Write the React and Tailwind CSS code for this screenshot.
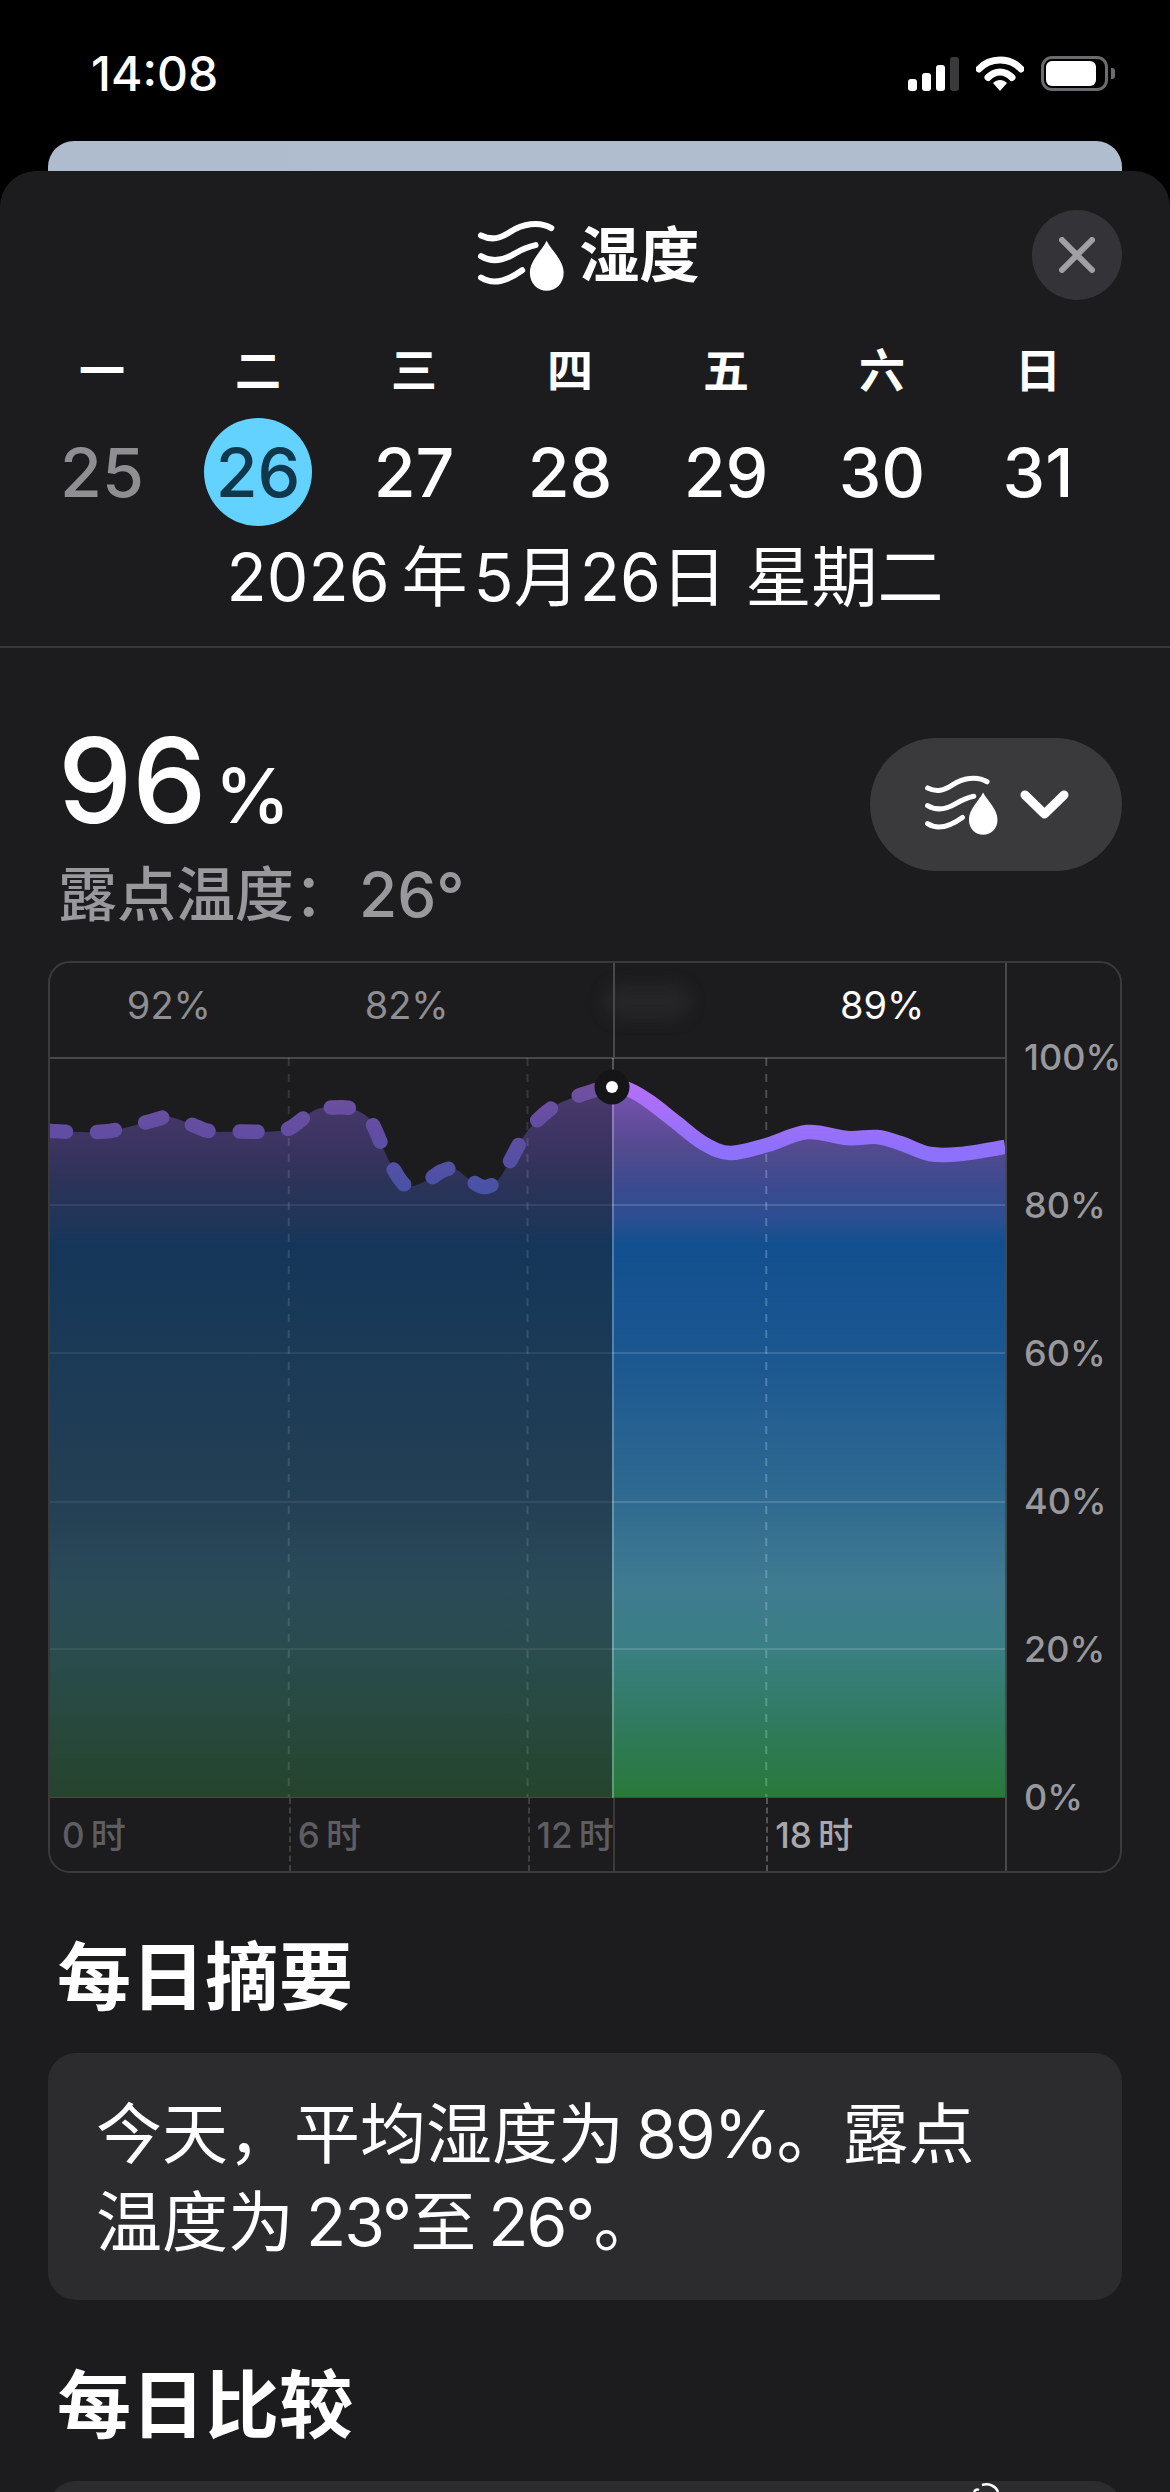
const FONT = 'font-["Inter","Noto_Sans_CJK_SC",sans-serif]';

// curve points read off the chart, in page pixels
const pastPoints = [
  [48, 1131], [105, 1131.5], [151, 1121], [170, 1117], [195, 1126], [212, 1131.5], [243, 1131.5], [273, 1131.5],
  [290, 1128], [315, 1110], [333, 1107.5], [350, 1108], [365, 1115], [373, 1125], [384, 1150], [394, 1170],
  [407, 1186], [426, 1181], [442, 1171], [455, 1169], [470, 1180], [484, 1187], [497, 1181], [509, 1163],
  [526, 1133], [549, 1110], [572, 1098], [612, 1085],
];
const futurePoints = [
  [612, 1085], [630, 1090], [650, 1102], [677, 1123], [703, 1143], [730, 1153], [767, 1145], [807, 1132],
  [847, 1138], [877, 1137], [900, 1143], [930, 1154], [960, 1154], [1005, 1147],
];

function smoothPath(pts) {
  let d = `M${pts[0][0]} ${pts[0][1]}`;
  for (let i = 0; i < pts.length - 1; i++) {
    const p0 = pts[i - 1] || pts[i];
    const p1 = pts[i];
    const p2 = pts[i + 1];
    const p3 = pts[i + 2] || p2;
    const c1x = p1[0] + (p2[0] - p0[0]) / 6;
    const c1y = p1[1] + (p2[1] - p0[1]) / 6;
    const c2x = p2[0] - (p3[0] - p1[0]) / 6;
    const c2y = p2[1] - (p3[1] - p1[1]) / 6;
    d += ` C${c1x} ${c1y} ${c2x} ${c2y} ${p2[0]} ${p2[1]}`;
  }
  return d;
}

const pastLine = smoothPath(pastPoints);
const futureLine = smoothPath(futurePoints);
const pastArea = `${pastLine} L612 1798 L48 1798 Z`;
const futureArea = `${futureLine} L1005 1798 L612 1798 Z`;

function HumidityIcon({ className }) {
  return (
    <svg viewBox="50 50 260 212" className={className} fill="none">
      <g stroke="white" strokeWidth="18" strokeLinecap="round">
        <path d="M62 96 C95 112 120 105 150 85 C185 62 235 52 272 74" />
        <path d="M62 158 C95 178 130 170 160 152 C180 140 200 130 225 125" />
        <path d="M62 222 C90 240 130 240 185 200" />
      </g>
      <path
        d="M258 112 C245 140 208 170 208 208 C208 240 232 261 258 261 C285 261 309 240 309 208 C309 170 272 140 258 112 Z"
        fill="white"
      />
    </svg>
  );
}

function StatusBar() {
  return (
    <div className="h-[141px] shrink-0 flex items-start justify-between pl-[91px] pr-[55px] pt-[49px]">
      <span className="text-[48px] leading-[50px] font-medium text-white">14:08</span>
      <div className="flex items-center gap-[17px] mt-[7px]">
        <div className="flex items-end gap-[5px] h-[34px]">
          <div className="w-[9px] h-[12px] rounded-[3px] bg-white" />
          <div className="w-[9px] h-[18px] rounded-[3px] bg-white" />
          <div className="w-[9px] h-[26px] rounded-[3px] bg-white" />
          <div className="w-[9px] h-[34px] rounded-[3px] bg-[#3a3a3c]" />
        </div>
        <svg viewBox="0 0 48 35" className="w-[48px] h-[35px]" fill="none">
          <path d="M3 13 C14 1 34 1 45 13" stroke="white" strokeWidth="7" strokeLinecap="round" />
          <path d="M12 21.5 C19 14 29 14 36 21.5" stroke="white" strokeWidth="7" strokeLinecap="round" />
          <path d="M17 27 C21 23 27 23 31 27 L24 35 Z" fill="white" />
        </svg>
        <div className="flex items-center">
          <div className="w-[67px] h-[35px] rounded-[11px] border-[3px] border-[#6c6c70] p-[2px]">
            <div className="w-[50px] h-full rounded-[6px] bg-white" />
          </div>
          <div className="w-[4px] h-[11px] rounded-r-[3px] bg-[#6c6c70] ml-[3px]" />
        </div>
      </div>
    </div>
  );
}

function Chart() {
  return (
    <div className="relative mx-[48px] h-[912px] rounded-[22px] border-2 border-[#3a3a3c] flex overflow-hidden">
      <div className="w-[955px] shrink-0 flex flex-col">
        <div className="relative h-[94px] shrink-0 grid grid-cols-4 items-center text-[38px] leading-none text-[#8e8e93] pb-[10px] pr-[4px]">
          <span className="text-center">92%</span>
          <span className="text-center">82%</span>
          <span />
          <span className="text-center text-white">89%</span>
          {/* smudged out label */}
          <div className="absolute left-[554px] top-[22px] w-[86px] h-[34px] rounded-full bg-[#252527] blur-[7px]" />
          <div className="absolute left-[563px] top-0 bottom-0 w-[2px] bg-[#48484a]" />
        </div>
        <svg viewBox="50 1057 955 741" className="w-[955px] h-[741px] shrink-0 block">
          <defs>
            <linearGradient id="futureFill" gradientUnits="userSpaceOnUse" x1="0" y1="1085" x2="0" y2="1798">
              <stop offset="0" stopColor="#7c52b2" />
              <stop offset="0.09" stopColor="#534a8f" />
              <stop offset="0.14" stopColor="#3d4a90" />
              <stop offset="0.19" stopColor="#2a4f92" />
              <stop offset="0.222" stopColor="#124f8f" />
              <stop offset="0.38" stopColor="#1b5790" />
              <stop offset="0.58" stopColor="#2f6a91" />
              <stop offset="0.7" stopColor="#3f7b90" />
              <stop offset="0.79" stopColor="#3a7f84" />
              <stop offset="0.9" stopColor="#2f7a5c" />
              <stop offset="1" stopColor="#29793a" />
            </linearGradient>
            <linearGradient id="pastFill" gradientUnits="userSpaceOnUse" x1="0" y1="1085" x2="0" y2="1798">
              <stop offset="0" stopColor="#4b3a6c" />
              <stop offset="0.09" stopColor="#3a3360" />
              <stop offset="0.14" stopColor="#2b3358" />
              <stop offset="0.19" stopColor="#213558" />
              <stop offset="0.222" stopColor="#15365a" />
              <stop offset="0.38" stopColor="#1b3a56" />
              <stop offset="0.58" stopColor="#233f54" />
              <stop offset="0.7" stopColor="#2a4a58" />
              <stop offset="0.79" stopColor="#2a4c4e" />
              <stop offset="0.9" stopColor="#27493c" />
              <stop offset="1" stopColor="#25432e" />
            </linearGradient>
            <linearGradient id="pastStroke" gradientUnits="userSpaceOnUse" x1="0" y1="1085" x2="0" y2="1195">
              <stop offset="0" stopColor="#70509f" />
              <stop offset="0.45" stopColor="#614da3" />
              <stop offset="1" stopColor="#4653a6" />
            </linearGradient>
            <linearGradient id="futureStroke" gradientUnits="userSpaceOnUse" x1="0" y1="1085" x2="0" y2="1150">
              <stop offset="0" stopColor="#b56ff6" />
              <stop offset="1" stopColor="#8d70fb" />
            </linearGradient>
          </defs>

          <path d={pastArea} fill="url(#pastFill)" />
          <path d={futureArea} fill="url(#futureFill)" />

          {/* grid */}
          <line x1="48" x2="1005" y1="1058" y2="1058" stroke="#48484a" strokeWidth="2" />
          {[1205, 1353, 1502, 1649].map((y) => (
            <g key={y}>
              <line x1="48" x2="612" y1={y} y2={y} stroke="white" strokeOpacity="0.07" strokeWidth="2" />
              <line x1="612" x2="1005" y1={y} y2={y} stroke="white" strokeOpacity="0.14" strokeWidth="2" />
            </g>
          ))}
          {[288.75, 527.5, 766.25].map((x) => (
            <line
              key={x}
              x1={x}
              x2={x}
              y1="1058"
              y2="1798"
              stroke="white"
              strokeOpacity={x === 766.25 ? 0.22 : 0.12}
              strokeWidth="2"
              strokeDasharray="8 8"
            />
          ))}
          <line x1="48" x2="1005" y1="1797.5" y2="1797.5" stroke="#2c5a34" strokeWidth="1" />
          <line x1="613" x2="613" y1="1058" y2="1798" stroke="white" strokeOpacity="0.26" strokeWidth="2" />

          {/* humidity curve */}
          <path
            d={pastLine}
            fill="none"
            stroke="url(#pastStroke)"
            strokeWidth="14.5"
            strokeLinecap="round"
            strokeDasharray="18 31"
          />
          <path d={futureLine} fill="none" stroke="url(#futureStroke)" strokeWidth="14.5" />
          <circle cx="612" cy="1087" r="17.5" fill="#151517" />
          <circle cx="612" cy="1087" r="6" fill="white" />
        </svg>
        <div className="relative flex-1 grid grid-cols-4 text-[35px] leading-none font-medium text-[#5e5e62]">
          <span className="pl-[12px] pt-[20px]">0{'\u2009'}时</span>
          <span className="pl-[7px] pt-[20px] border-l-2 border-dashed border-[#3f3f42]">6{'\u2009'}时</span>
          <span className="pl-[7px] pt-[20px] border-l-2 border-dashed border-[#3f3f42] whitespace-nowrap">12{'\u2009'}时</span>
          <span className="pl-[7px] pt-[20px] border-l-2 border-dashed border-[#555559] text-[#a8a8ac]">18{'\u2009'}时</span>
          <div className="absolute left-[563px] top-0 bottom-0 w-[2px] bg-[#3a3a3c]" />
        </div>
      </div>
      <div className="flex-1 border-l-2 border-[#48484a] flex flex-col justify-between pt-[74px] pb-[54px] pl-[17px] text-[36px] leading-[40px] font-medium text-[#98989d] whitespace-nowrap">
        <span>100%</span>
        <span>80%</span>
        <span>60%</span>
        <span>40%</span>
        <span>20%</span>
        <span>0%</span>
      </div>
    </div>
  );
}

export default function App() {
  const weekdays = ['一', '二', '三', '四', '五', '六', '日'];
  const days = [25, 26, 27, 28, 29, 30, 31];

  return (
    <div className={`relative w-[1170px] h-[2492px] overflow-hidden bg-black flex flex-col ${FONT}`}>
      <StatusBar />
      <div className="h-[30px] shrink-0 mx-[48px] rounded-t-[26px] bg-gradient-to-r from-[#aebccd] to-[#b0bdcf]" />

      <div className="flex-1 rounded-t-[36px] bg-[#1c1c1e] text-white">
        {/* title row */}
        <div className="grid grid-cols-[90px_1fr_90px] items-center mx-[48px] mt-[39px] h-[90px]">
          <span />
          <div className="flex items-center justify-center gap-[16px] pl-[6px]">
            <HumidityIcon className="w-[87px] h-[71px]" />
            <span className="text-[60px] leading-none font-bold">湿度</span>
          </div>
          <button className="w-[90px] h-[90px] rounded-full bg-[#343438] flex items-center justify-center">
            <svg viewBox="0 0 36 36" className="w-[36px] h-[36px]" fill="none">
              <path d="M3 3 L33 33 M33 3 L3 33" stroke="#a0a0a5" strokeWidth="6" strokeLinecap="round" />
            </svg>
          </button>
        </div>

        {/* week strip */}
        <div className="grid grid-cols-7 ml-[24px] mr-[54px] mt-[45px] text-center text-[46px] leading-[50px] font-bold">
          {weekdays.map((d) => (
            <span key={d}>{d}</span>
          ))}
        </div>
        <div className="grid grid-cols-7 ml-[24px] mr-[54px] mt-[23px] text-[68px] leading-none font-medium">
          {days.map((d) => (
            <div key={d} className="flex justify-center">
              <span
                className={`w-[108px] h-[108px] rounded-full flex items-center justify-center ${
                  d === 26 ? 'bg-[#64d2ff] text-[#10384c]' : d === 25 ? 'text-[#8e8e93]' : 'text-white'
                }`}
              >
                {d}
              </span>
            </div>
          ))}
        </div>
        <div className="text-center text-[66px] leading-[70px] mt-[16px] whitespace-nowrap">
          2026{'\u2009'}年{'\u200a'}5月26日 星期二
        </div>
        <div className="h-[2px] bg-[#38383a] mt-[34px]" />

        {/* current reading */}
        <div className="flex items-start justify-between pl-[60px] pr-[48px] mt-[88px] h-[225px]">
          <div>
            <div className="flex items-baseline leading-none font-medium ml-[-2px]">
              <span className="text-[118px] leading-[88px]">96</span>
              <span className="text-[76px] leading-[88px] ml-[8px]">%</span>
            </div>
            <div className="flex items-center mt-[26px] ml-[-2px] text-[59px] leading-[60px] font-medium text-[#98989d]">
              <span>露点温度：</span>
              <span className="text-[62px] ml-[6px]">26°</span>
            </div>
          </div>
          <button className="w-[252px] h-[133px] mt-[2px] rounded-full bg-[#3a3a3c] flex items-center justify-center gap-[22px]">
            <HumidityIcon className="w-[74px] h-[60px]" />
            <svg viewBox="0 0 49 29" className="w-[49px] h-[29px]" fill="none">
              <path d="M5 5 L24.5 24 L44 5" stroke="white" strokeWidth="9" strokeLinecap="round" strokeLinejoin="round" />
            </svg>
          </button>
        </div>

        <Chart />

        {/* summary */}
        <h2 className="pl-[57px] mt-[64px] text-[74px] leading-[80px] font-bold">每日摘要</h2>
        <div className="mx-[48px] mt-[36px] h-[247px] rounded-[28px] bg-[#2c2c2e] px-[48px] pt-[37px] text-[66px] leading-[88px] whitespace-nowrap">
          今天，平均湿度为{'\u2009'}<span className="tracking-[-2px]">89%</span>。露点
          <br />
          温度为{'\u2009'}<span className="tracking-[-2px]">23°</span>至{'\u2009'}<span className="tracking-[-2px]">26°</span>。
        </div>

        <h2 className="pl-[57px] mt-[65px] text-[74px] leading-[80px] font-bold">每日比较</h2>
        <div className="mx-[48px] mt-[36px] h-[60px] rounded-t-[28px] bg-[#2c2c2e]" />
      </div>

      {/* watermark logo, cut off by the bottom edge */}
      <svg viewBox="0 0 30 10" className="absolute left-[972px] top-[2482px] w-[30px] h-[10px]" fill="none">
        <path d="M10 3 C17 1 24 4 26 10" stroke="white" strokeWidth="2.5" />
        <path d="M2 10 C3 8 5 7 7 8" stroke="white" strokeWidth="2.5" />
      </svg>
    </div>
  );
}
